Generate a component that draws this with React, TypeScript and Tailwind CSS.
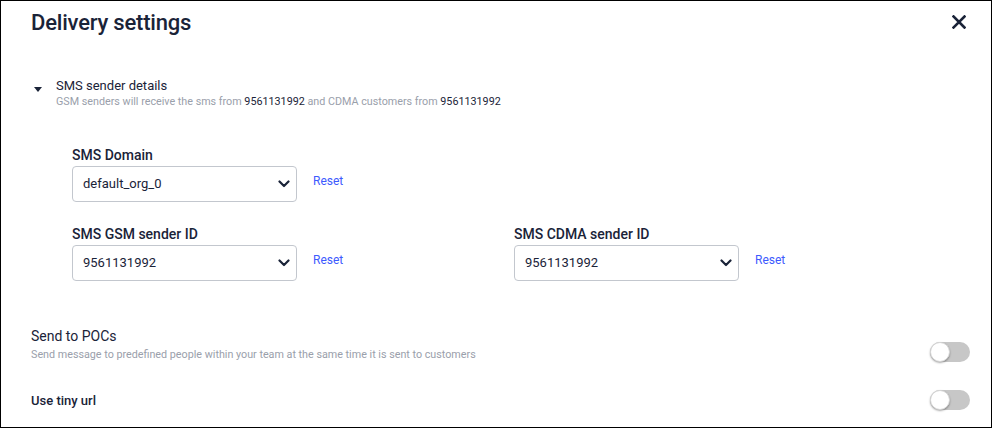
import React from "react";

function Chevron() {
  return (
    <svg width="12" height="8" viewBox="0 0 12 8" fill="none">
      <path d="M1.5 1.5L6 6L10.5 1.5" stroke="#1a2338" strokeWidth="2.2" strokeLinecap="round" strokeLinejoin="round" />
    </svg>
  );
}

function SelectField({ label, value }: { label: string; value: string }) {
  return (
    <div className="flex flex-col">
      <div className="text-[14px] leading-[20px] font-medium text-[#1a2338] mb-[1px]">{label}</div>
      <div className="flex items-end">
        <div className="w-[225px] h-[36px] border border-[#c3c7ce] rounded-[4px] flex items-center justify-between pl-[10px] pr-[6px]">
          <span className="text-[13px] text-[#1a2338]">{value}</span>
          <Chevron />
        </div>
        <span className="ml-[16px] mb-[14px] text-[12px] text-[#3d5afe] leading-[14px]">Reset</span>
      </div>
    </div>
  );
}

function Toggle() {
  return (
    <div className="relative w-[40px] h-[20px] rounded-full bg-[#c7c7c7]">
      <div className="absolute left-0 top-0 w-[20px] h-[20px] rounded-full bg-white border border-[#d6d6d6] shadow-[0_1px_2px_rgba(0,0,0,0.35)]" />
    </div>
  );
}

export default function App() {
  return (
    <div
      className="w-[992px] h-[428px] border border-black bg-white relative overflow-hidden"
      style={{ fontFamily: "Roboto, 'Liberation Sans', sans-serif" }}
    >
      <div className="flex items-start justify-between pl-[30px] pr-[25px] pt-[8px]">
        <h1 className="text-[22px] leading-[28px] font-medium tracking-[-0.2px] text-[#1a2338]">Delivery settings</h1>
        <svg width="14" height="14" viewBox="0 0 14 14" className="mt-[6px]">
          <path d="M1.5 1.5L12.5 12.5M12.5 1.5L1.5 12.5" stroke="#1a2338" strokeWidth="2.6" strokeLinecap="square" />
        </svg>
      </div>

      <div className="pl-[33px] mt-[41px] flex items-start">
        <svg width="8" height="5" viewBox="0 0 8 5" className="mt-[9px]">
          <path d="M0 0H8L4 5Z" fill="#1a2338" />
        </svg>
        <div className="ml-[14px]">
          <div className="text-[13px] leading-[16px] text-[#1a2338]">SMS sender details</div>
          <div className="text-[10.75px] leading-[14px] text-[#9aa0ab] mt-[1px]">
            GSM senders will receive the sms from <span className="text-[#1a2338]">9561131992</span> and CDMA customers from{" "}
            <span className="text-[#1a2338]">9561131992</span>
          </div>
        </div>
      </div>

      <div className="pl-[71px] mt-[36px] flex flex-col gap-[22px]">
        <SelectField label="SMS Domain" value="default_org_0" />
        <div className="flex">
          <div className="w-[442px]">
            <SelectField label="SMS GSM sender ID" value="9561131992" />
          </div>
          <SelectField label="SMS CDMA sender ID" value="9561131992" />
        </div>
      </div>

      <div className="pl-[30px] pr-[21px] mt-[46px] flex items-end justify-between">
        <div>
          <div className="text-[14px] leading-[18px] text-[#1a2338]">Send to POCs</div>
          <div className="text-[10.75px] leading-[14px] text-[#9aa0ab] mt-[3px]">
            Send message to predefined people within your team at the same time it is sent to customers
          </div>
        </div>
        <Toggle />
      </div>

      <div className="pl-[30px] pr-[21px] mt-[28px] flex items-center justify-between">
        <div className="text-[13px] leading-[18px] font-medium text-[#1a2338] translate-y-[1px]">Use tiny url</div>
        <Toggle />
      </div>
    </div>
  );
}
